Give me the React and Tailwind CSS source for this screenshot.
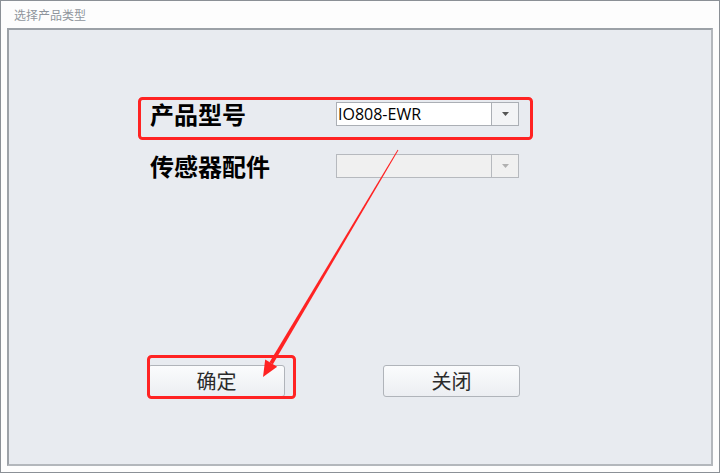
export default function App() {
    return (
        <div className="relative w-[720px] h-[473px] border border-[#8b9096] bg-[#fdfdfd] flex flex-col" style={{ fontFamily: '"Noto Sans CJK SC", sans-serif' }}>
            {/* Title */}
            <div className="h-[27px] pl-[13px] pt-[6px] text-[12px] leading-[16px] text-[#8f959c]">选择产品类型</div>

            {/* Panel */}
            <div className="mx-[6px] mb-[6px] flex-1 border-2 border-t-[#9ca1a7] border-l-[#9ca1a7] border-r-[#b3b7bc] border-b-[#b3b7bc] bg-[#e8ebf0] flex flex-col pl-[141px] pt-[72px]">
                <div className="flex items-center h-[24px]">
                    <span className="w-[186px] text-[24px] font-bold text-black leading-none">产品型号</span>
                    <div className="w-[183px] h-[24px] flex border border-[#abafb5] bg-white">
                        <span className="flex-1 pl-[1px] text-[16px] leading-[22px] text-black" style={{ fontFamily: '"Open Sans", "Noto Sans", sans-serif' }}>IO808-EWR</span>
                        <span className="w-[27px] border-l border-[#abafb5] bg-[#f3f4f6] flex items-center justify-center">
                            <svg width="7" height="4" viewBox="0 0 7 4"><path d="M0 0h7L3.5 4z" fill="#555" /></svg>
                        </span>
                    </div>
                </div>

                <div className="flex items-center h-[24px] mt-[28px]">
                    <span className="w-[186px] text-[24px] font-bold text-black leading-none">传感器配件</span>
                    <div className="w-[183px] h-[24px] flex border border-[#b6b9be] bg-[#f0f0f0]">
                        <span className="flex-1" />
                        <span className="w-[27px] border-l border-[#b6b9be] flex items-center justify-center">
                            <svg width="7" height="4" viewBox="0 0 7 4"><path d="M0 0h7L3.5 4z" fill="#b0b0b0" /></svg>
                        </span>
                    </div>
                </div>

                <div className="flex mt-[187px] ml-[-2px] gap-[98px]">
                    <button className="w-[137px] h-[32px] border border-[#b0b4ba] rounded-[3px] bg-gradient-to-b from-[#fbfcfd] to-[#eceef2] text-[20px] leading-none text-[#2b2b2b]">确定</button>
                    <button className="w-[137px] h-[32px] border border-[#b0b4ba] rounded-[3px] bg-gradient-to-b from-[#fbfcfd] to-[#eceef2] text-[20px] leading-none text-[#2b2b2b]">关闭</button>
                </div>
            </div>

            {/* Annotation overlay */}
            <svg className="absolute left-[-1px] top-[-1px] pointer-events-none" width="720" height="473" viewBox="0 0 720 473">
                <rect x="139.5" y="98.5" width="392" height="40" rx="3" fill="none" stroke="#ff2323" strokeWidth="3" />
                <rect x="148.5" y="356.5" width="146" height="41" rx="3" fill="none" stroke="#ff2323" strokeWidth="3" />
                <polygon points="398.4,150.3 397.6,149.7 269.5,362.2 272.9,364.2" fill="#ff2323" />
                <polygon points="263,377 277.2,366.8 265.2,359.6" fill="#ff2323" />
            </svg>
        </div>
    );
}
